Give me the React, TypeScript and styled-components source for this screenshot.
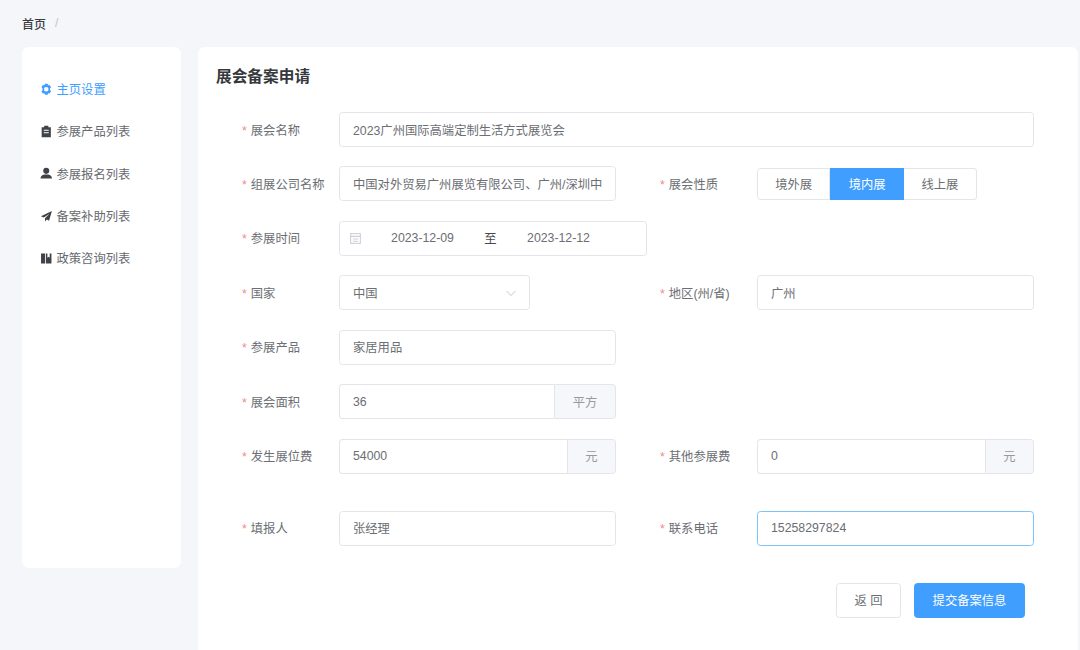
import React from "react";
import styled, { createGlobalStyle } from "styled-components";

const Global = createGlobalStyle`
  html, body { margin: 0; padding: 0; background: #f5f6fa; }
  * { box-sizing: border-box; }
  body { font-family: "Liberation Sans", "Noto Sans CJK SC", sans-serif; width: 1080px; height: 650px; overflow: hidden; }
`;

const Page = styled.div`
  width: 1080px;
  height: 650px;
  overflow: hidden;
  padding: 16px 2px 0 22px;
`;
const Breadcrumb = styled.div`
  display: flex;
  align-items: center;
  height: 14px;
  font-size: 12px;
  font-weight: 500;
  color: #3a3c40;
  gap: 9px;
`;
const Slash = styled.span`
  color: #c0c4cc;
  font-weight: 400;
`;
const Columns = styled.div`
  display: flex;
  gap: 17px;
  margin-top: 17px;
  align-items: flex-start;
`;
const Side = styled.nav`
  width: 159px;
  height: 521px;
  background: #fff;
  border-radius: 7px;
  padding: 21px 0 0 18px;
  flex: none;
`;
const NavItem = styled.div<{ $active?: boolean }>`
  display: flex;
  align-items: center;
  gap: 4px;
  height: 42.3px;
  font-size: 12.3px;
  color: ${(p) => (p.$active ? "#409eff" : "#66696e")};
`;
const NavIcon = styled.svg`
  width: 12.5px;
  height: 12.5px;
  flex: none;
  fill: currentColor;
`;
const NavDark = styled.span<{ $active?: boolean }>`
  display: flex;
  color: ${(p) => (p.$active ? "#409eff" : "#3f4246")};
`;
const Main = styled.main`
  width: 880px;
  height: 640px;
  background: #fff;
  border-radius: 7px 7px 0 0;
  padding: 19px 44px 0 18px;
`;
const Title = styled.h1`
  margin: 0;
  height: 21px;
  line-height: 21px;
  font-size: 15.7px;
  font-weight: 700;
  color: #36383c;
`;
const Form = styled.div`
  margin-top: 25px;
  padding-left: 26px;
  display: flex;
  flex-direction: column;
  gap: 19.45px;
`;
const Row = styled.div<{ $extra?: number }>`
  display: flex;
  height: 35px;
  margin-top: ${(p) => p.$extra ?? 0}px;
`;
const Field = styled.div<{ $grow?: boolean }>`
  display: flex;
  align-items: center;
  width: ${(p) => (p.$grow ? "792px" : "374px")};
  flex: none;
`;
const SecondField = styled(Field)`
  margin-left: 44px;
`;
const Label = styled.label`
  width: 97px;
  flex: none;
  font-size: 12.3px;
  color: #6b6e73;
  white-space: nowrap;
  &::before {
    content: "*";
    color: #f08a8a;
    margin-right: 4px;
  }
`;
const InputBox = styled.div<{ $focus?: boolean; $w?: number }>`
  height: 35px;
  width: ${(p) => (p.$w ? `${p.$w}px` : "100%")};
  flex: ${(p) => (p.$w ? "none" : "1")};
  min-width: 0;
  display: flex;
  align-items: center;
  padding: 0 12px 0 13px;
  background: #fff;
  border: 1px solid ${(p) => (p.$focus ? "#7cc4f8" : "#e3e5ea")};
  border-radius: 3.5px;
  font-size: 12.3px;
  color: #6b6e73;
  white-space: nowrap;
  overflow: hidden;
`;
const Group = styled.div`
  display: flex;
  flex: 1;
  height: 35px;
  min-width: 0;
`;
const GroupInput = styled(InputBox)`
  border-radius: 3.5px 0 0 3.5px;
  border-right: 0;
`;
const Append = styled.div<{ $w: number }>`
  width: ${(p) => p.$w}px;
  flex: none;
  display: flex;
  align-items: center;
  justify-content: center;
  background: #f5f7fa;
  border: 1px solid #e3e5ea;
  border-radius: 0 3.5px 3.5px 0;
  font-size: 12.3px;
  color: #97999e;
`;
const Radios = styled.div`
  display: flex;
  height: 32px;
`;
const RadioBtn = styled.div<{ $on?: boolean }>`
  width: 73.4px;
  display: flex;
  align-items: center;
  justify-content: center;
  font-size: 12.3px;
  color: ${(p) => (p.$on ? "#fff" : "#6b6e73")};
  background: ${(p) => (p.$on ? "#409eff" : "#fff")};
  border: 1px solid ${(p) => (p.$on ? "#409eff" : "#e3e5ea")};
  border-left-width: ${(p) => (p.$on ? "1px" : "0")};
  &:first-child {
    border-left-width: 1px;
    border-radius: 3.5px 0 0 3.5px;
  }
  &:last-child {
    border-radius: 0 3.5px 3.5px 0;
  }
`;
const DateBox = styled(InputBox)`
  padding: 0 0 0 9px;
`;
const CalIcon = styled.svg`
  width: 13px;
  height: 13px;
  flex: none;
  fill: none;
  stroke: #cdd0d6;
  stroke-width: 1;
`;
const DateVal = styled.span`
  width: 65px;
  text-align: center;
  flex: none;
`;
const DateStart = styled(DateVal)`
  margin-left: 28px;
`;
const DateSep = styled.span`
  width: 71px;
  text-align: center;
  flex: none;
  color: #47494d;
`;
const Chevron = styled.svg`
  width: 12px;
  height: 12px;
  margin-left: auto;
  flex: none;
  fill: none;
  stroke: #c0c4cc;
  stroke-width: 1;
`;
const Actions = styled.div`
  display: flex;
  justify-content: flex-end;
  gap: 13px;
  margin-top: 37px;
  padding-right: 9px;
`;
const Btn = styled.button<{ $primary?: boolean; $w: number }>`
  width: ${(p) => p.$w}px;
  height: 35px;
  padding: 0;
  font: inherit;
  font-size: 12.3px;
  border-radius: 3.5px;
  color: ${(p) => (p.$primary ? "#fff" : "#6b6e73")};
  background: ${(p) => (p.$primary ? "#409eff" : "#fff")};
  border: 1px solid ${(p) => (p.$primary ? "#409eff" : "#e3e5ea")};
`;

const nav: { label: string; d: string }[] = [
  {
    label: "主页设置",
    d: "M4.700.7h2.600l.5 1.500 1.500-.3 1.300 2.200-1 1.200v1.400l1 1.200-1.300 2.200-1.500-.3-.5 1.500H4.700l-.5-1.500-1.500.3L1.400 8.100l1-1.200V5.300l-1-1.200 1.300-2.200 1.500.3.5-1.500zM6 3.800a2.200 2.200 0 100 4.400 2.200 2.200 0 000-4.400z",
  },
  {
    label: "参展产品列表",
    d: "M4 .8h4v1.400h2.400v9.600H1.600V2.200H4V.8zM3.600 4.600v1h4.800v-1H3.600zM3.600 7v1h4.800V7H3.600z",
  },
  {
    label: "参展报名列表",
    d: "M6 .8a2.900 2.900 0 012.900 2.900A2.900 2.900 0 016 6.600a2.900 2.900 0 01-2.900-2.900A2.900 2.900 0 016 .8zM4 7.200h4c1.900.3 3.300 1.500 3.500 3.800H.5C.7 8.700 2.100 7.500 4 7.200z",
  },
  {
    label: "备案补助列表",
    d: "M11.400 1L.9 5.900l2.700 1.400L9 3.500 4.800 8v3l1.700-2 2.200 1.200L11.400 1z",
  },
  {
    label: "政策咨询列表",
    d: "M1 1.500h3.800v9.500H1zM5.600 1.500h1.500v4l1.100-1 1.100 1v-4H11V11H5.600z",
  },
];

export default function App() {
  return (
    <Page>
      <Global />
      <Breadcrumb>
        <span>首页</span>
        <Slash>/</Slash>
      </Breadcrumb>
      <Columns>
        <Side>
          {nav.map((n, i) => (
            <NavItem key={n.label} $active={i === 0}>
              <NavDark $active={i === 0}>
                <NavIcon viewBox="0 0 12 12">
                  <path fillRule="evenodd" d={n.d} />
                </NavIcon>
              </NavDark>
              {n.label}
            </NavItem>
          ))}
        </Side>
        <Main>
          <Title>展会备案申请</Title>
          <Form>
            <Row>
              <Field $grow>
                <Label>展会名称</Label>
                <InputBox>2023广州国际高端定制生活方式展览会</InputBox>
              </Field>
            </Row>
            <Row>
              <Field>
                <Label>组展公司名称</Label>
                <InputBox>中国对外贸易广州展览有限公司、广州/深圳中</InputBox>
              </Field>
              <SecondField>
                <Label>展会性质</Label>
                <Radios>
                  <RadioBtn>境外展</RadioBtn>
                  <RadioBtn $on>境内展</RadioBtn>
                  <RadioBtn>线上展</RadioBtn>
                </Radios>
              </SecondField>
            </Row>
            <Row>
              <Field>
                <Label>参展时间</Label>
                <DateBox $w={308}>
                  <CalIcon viewBox="0 0 12 12">
                    <rect x="1.500" y="1.500" width="9" height="9" />
                    <path d="M1.500 4h9M3.500 6.500h5M3.500 8.500h5" />
                  </CalIcon>
                  <DateStart>2023-12-09</DateStart>
                  <DateSep>至</DateSep>
                  <DateVal>2023-12-12</DateVal>
                </DateBox>
              </Field>
            </Row>
            <Row>
              <Field>
                <Label>国家</Label>
                <InputBox $w={191}>
                  中国
                  <Chevron viewBox="0 0 12 12">
                    <path d="M1.500 4l4.500 4.500L10.500 4" />
                  </Chevron>
                </InputBox>
              </Field>
              <SecondField>
                <Label>地区(州/省)</Label>
                <InputBox>广州</InputBox>
              </SecondField>
            </Row>
            <Row>
              <Field>
                <Label>参展产品</Label>
                <InputBox>家居用品</InputBox>
              </Field>
            </Row>
            <Row>
              <Field>
                <Label>展会面积</Label>
                <Group>
                  <GroupInput>36</GroupInput>
                  <Append $w={62}>平方</Append>
                </Group>
              </Field>
            </Row>
            <Row>
              <Field>
                <Label>发生展位费</Label>
                <Group>
                  <GroupInput>54000</GroupInput>
                  <Append $w={49}>元</Append>
                </Group>
              </Field>
              <SecondField>
                <Label>其他参展费</Label>
                <Group>
                  <GroupInput>0</GroupInput>
                  <Append $w={49}>元</Append>
                </Group>
              </SecondField>
            </Row>
            <Row $extra={17.5}>
              <Field>
                <Label>填报人</Label>
                <InputBox>张经理</InputBox>
              </Field>
              <SecondField>
                <Label>联系电话</Label>
                <InputBox $focus>15258297824</InputBox>
              </SecondField>
            </Row>
          </Form>
          <Actions>
            <Btn $w={65}>返 回</Btn>
            <Btn $primary $w={111}>提交备案信息</Btn>
          </Actions>
        </Main>
      </Columns>
    </Page>
  );
}
